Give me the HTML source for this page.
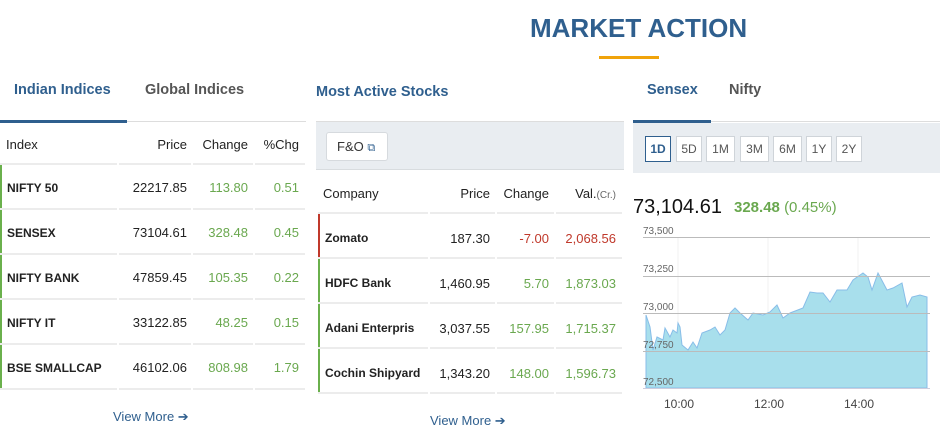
<!DOCTYPE html>
<html><head><meta charset="utf-8"><style>
*{margin:0;padding:0;box-sizing:border-box}
body{width:947px;height:439px;background:#fff;font-family:"Liberation Sans",sans-serif;color:#222;position:relative;overflow:hidden;font-size:13px}
.a{position:absolute;white-space:nowrap}
.r{text-align:right}
.g{color:#6aa84f}.rd{color:#c0392b}
.ln{position:absolute;height:2px;background:#ececec}
.lb{position:absolute;width:2px;background:#6ab04c}
.btn{position:absolute;top:136px;height:26px;border:1px solid #cfd4d9;background:#fff;font-size:12px;color:#555;text-align:center;line-height:24px}
.gl{position:absolute;left:643px;width:287px;height:1px;background:#bbb}
.yl{position:absolute;left:643px;font-size:10px;color:#666}
.xl{position:absolute;top:397px;font-size:12px;color:#444}
.tab{position:absolute;top:82px;font-size:14.5px;font-weight:bold}
</style></head><body>
<div class="a" style="left:530px;top:13px;font-size:26px;font-weight:bold;color:#2f5f8e">MARKET ACTION</div>
<div class="a" style="left:599px;top:56px;width:60px;height:3px;background:#f0a30a"></div>

<!-- left -->
<div class="tab" style="left:14px;color:#2f5f8e">Indian Indices</div>
<div class="tab" style="left:145px;color:#555">Global Indices</div>
<div class="a" style="left:0;top:121px;width:306px;height:1px;background:#ddd"></div>
<div class="a" style="left:0;top:120px;width:127px;height:3px;background:#2f5f8e"></div>
<div class="a" style="left:6px;top:137px">Index</div>
<div class="a r" style="left:119px;width:68px;top:137px">Price</div>
<div class="a r" style="left:193px;width:55px;top:137px">Change</div>
<div class="a r" style="left:255px;width:44px;top:137px">%Chg</div>
<div class="ln" style="left:0;top:163px;width:117px"></div><div class="ln" style="left:119px;top:163px;width:72px"></div><div class="ln" style="left:193px;top:163px;width:60px"></div><div class="ln" style="left:255px;top:163px;width:50px"></div>

<div id="L"></div>
<div class="a" style="left:113px;top:409px;color:#2f5f8e;font-size:13px">View More ➔</div>

<!-- middle -->
<div class="a" style="left:316px;top:84px;font-size:14.5px;color:#2f5f8e;font-weight:bold">Most Active Stocks</div>
<div class="a" style="left:316px;top:121px;width:308px;height:1px;background:#ddd"></div>
<div class="a" style="left:316px;top:122px;width:308px;height:48px;background:#e9edf1;border-bottom:1px solid #d8dcdf"></div>
<div class="a" style="left:326px;top:132px;width:62px;height:29px;background:#fff;border:1px solid #d6dade;border-radius:3px;font-size:13px;line-height:27px;padding-left:10px;color:#333">F&amp;O <span style="color:#2f5f8e;font-size:11px">⧉</span></div>
<div class="a" style="left:323px;top:186px">Company</div>
<div class="a r" style="left:430px;width:60px;top:186px">Price</div>
<div class="a r" style="left:497px;width:52px;top:186px">Change</div>
<div class="a r" style="left:556px;width:60px;top:186px"><span>Val.</span><span style="font-size:10px;color:#666">(Cr.)</span></div>
<div class="ln" style="left:318px;top:212px;width:110px"></div><div class="ln" style="left:430px;top:212px;width:65px"></div><div class="ln" style="left:497px;top:212px;width:57px"></div><div class="ln" style="left:556px;top:212px;width:66px"></div>
<div id="M"></div>
<div class="a" style="left:430px;top:413px;color:#2f5f8e;font-size:13px">View More ➔</div>

<!-- right -->
<div class="tab" style="left:647px;color:#2f5f8e">Sensex</div>
<div class="tab" style="left:729px;color:#555">Nifty</div>
<div class="a" style="left:633px;top:121px;width:307px;height:1px;background:#ddd"></div>
<div class="a" style="left:633px;top:120px;width:78px;height:3px;background:#2f5f8e"></div>
<div class="a" style="left:633px;top:123px;width:307px;height:50px;background:#e9edf1"></div>
<div class="btn" style="left:645px;width:26px;border-color:#2f5f8e;color:#2f5f8e;font-weight:bold">1D</div>
<div class="btn" style="left:676px;width:26px">5D</div>
<div class="btn" style="left:706px;width:29px">1M</div>
<div class="btn" style="left:740px;width:29px">3M</div>
<div class="btn" style="left:773px;width:29px">6M</div>
<div class="btn" style="left:806px;width:26px">1Y</div>
<div class="btn" style="left:836px;width:26px">2Y</div>
<div class="a" style="left:633px;top:196px;font-size:20px;color:#111">73,104.61</div>
<div class="a" style="left:734px;top:199px;font-size:15px"><b class="g">328.48</b> <span class="g">(0.45%)</span></div>
<svg class="a" style="left:0;top:0" width="947" height="439">
<line x1="678" y1="237" x2="678" y2="388" stroke="#f0f0f0"/><line x1="768" y1="237" x2="768" y2="388" stroke="#f0f0f0"/><line x1="858" y1="237" x2="858" y2="388" stroke="#f0f0f0"/>
<polygon fill="#a8dfec" stroke="#88bde8" stroke-width="1" points="646,388 646,315 650,327 653,350 657,337 663,340 665,328 670,337 673,330 677,333 678,323 680,327 682,345 688,350 693,342 697,348 702,333 710,330 715,327 720,335 725,330 730,313 735,308 740,313 748,320 753,313 763,315 770,312 777,305 783,318 790,313 803,308 810,292 817,293 823,293 830,302 837,290 847,290 853,280 863,273 868,277 872,290 878,273 887,290 893,288 902,283 907,307 912,297 920,295 927,297 927,388"/>
</svg>
<div class="gl" style="top:237px"></div><div class="gl" style="top:276px"></div><div class="gl" style="top:313px"></div><div class="gl" style="top:351px"></div><div class="gl" style="top:388px;background:#ccd"></div>
<div class="yl" style="top:226px">73,500</div><div class="yl" style="top:264px">73,250</div><div class="yl" style="top:302px">73,000</div><div class="yl" style="top:340px">72,750</div><div class="yl" style="top:377px">72,500</div>
<div class="xl" style="left:664px">10:00</div><div class="xl" style="left:754px">12:00</div><div class="xl" style="left:844px">14:00</div>

<script>
var L=[["NIFTY 50","22217.85","113.80","0.51"],["SENSEX","73104.61","328.48","0.45"],["NIFTY BANK","47859.45","105.35","0.22"],["NIFTY IT","33122.85","48.25","0.15"],["BSE SMALLCAP","46102.06","808.98","1.79"]];
var h="";L.forEach(function(r,i){var t=165+45*i;
h+='<div class="lb" style="left:0;top:'+t+'px;height:43px"></div>';
h+='<div class="a" style="left:7px;top:'+(t+16)+'px;font-weight:bold;font-size:12px">'+r[0]+'</div>';
h+='<div class="a r" style="left:119px;width:68px;top:'+(t+15)+'px">'+r[1]+'</div>';
h+='<div class="a r g" style="left:193px;width:55px;top:'+(t+15)+'px">'+r[2]+'</div>';
h+='<div class="a r g" style="left:255px;width:44px;top:'+(t+15)+'px">'+r[3]+'</div>';
h+='<div class="ln" style="left:0;top:'+(t+43)+'px;width:117px"></div><div class="ln" style="left:119px;top:'+(t+43)+'px;width:72px"></div><div class="ln" style="left:193px;top:'+(t+43)+'px;width:60px"></div><div class="ln" style="left:255px;top:'+(t+43)+'px;width:50px"></div>';});
document.getElementById("L").innerHTML=h;
var M=[["Zomato","187.30","-7.00","2,068.56",1],["HDFC Bank","1,460.95","5.70","1,873.03",0],["Adani Enterpris","3,037.55","157.95","1,715.37",0],["Cochin Shipyard","1,343.20","148.00","1,596.73",0]];
h="";M.forEach(function(r,i){var t=214+45*i,c=r[4]?"rd":"g";
h+='<div class="lb" style="left:318px;top:'+t+'px;height:43px;background:'+(r[4]?"#c0392b":"#6ab04c")+'"></div>';
h+='<div class="a" style="left:325px;top:'+(t+17)+'px;font-weight:bold;font-size:12px">'+r[0]+'</div>';
h+='<div class="a r" style="left:430px;width:60px;top:'+(t+17)+'px">'+r[1]+'</div>';
h+='<div class="a r '+c+'" style="left:497px;width:52px;top:'+(t+17)+'px">'+r[2]+'</div>';
h+='<div class="a r '+c+'" style="left:556px;width:60px;top:'+(t+17)+'px">'+r[3]+'</div>';
h+='<div class="ln" style="left:318px;top:'+(t+43)+'px;width:110px"></div><div class="ln" style="left:430px;top:'+(t+43)+'px;width:65px"></div><div class="ln" style="left:497px;top:'+(t+43)+'px;width:57px"></div><div class="ln" style="left:556px;top:'+(t+43)+'px;width:66px"></div>';});
document.getElementById("M").innerHTML=h;
</script>
</body></html>
